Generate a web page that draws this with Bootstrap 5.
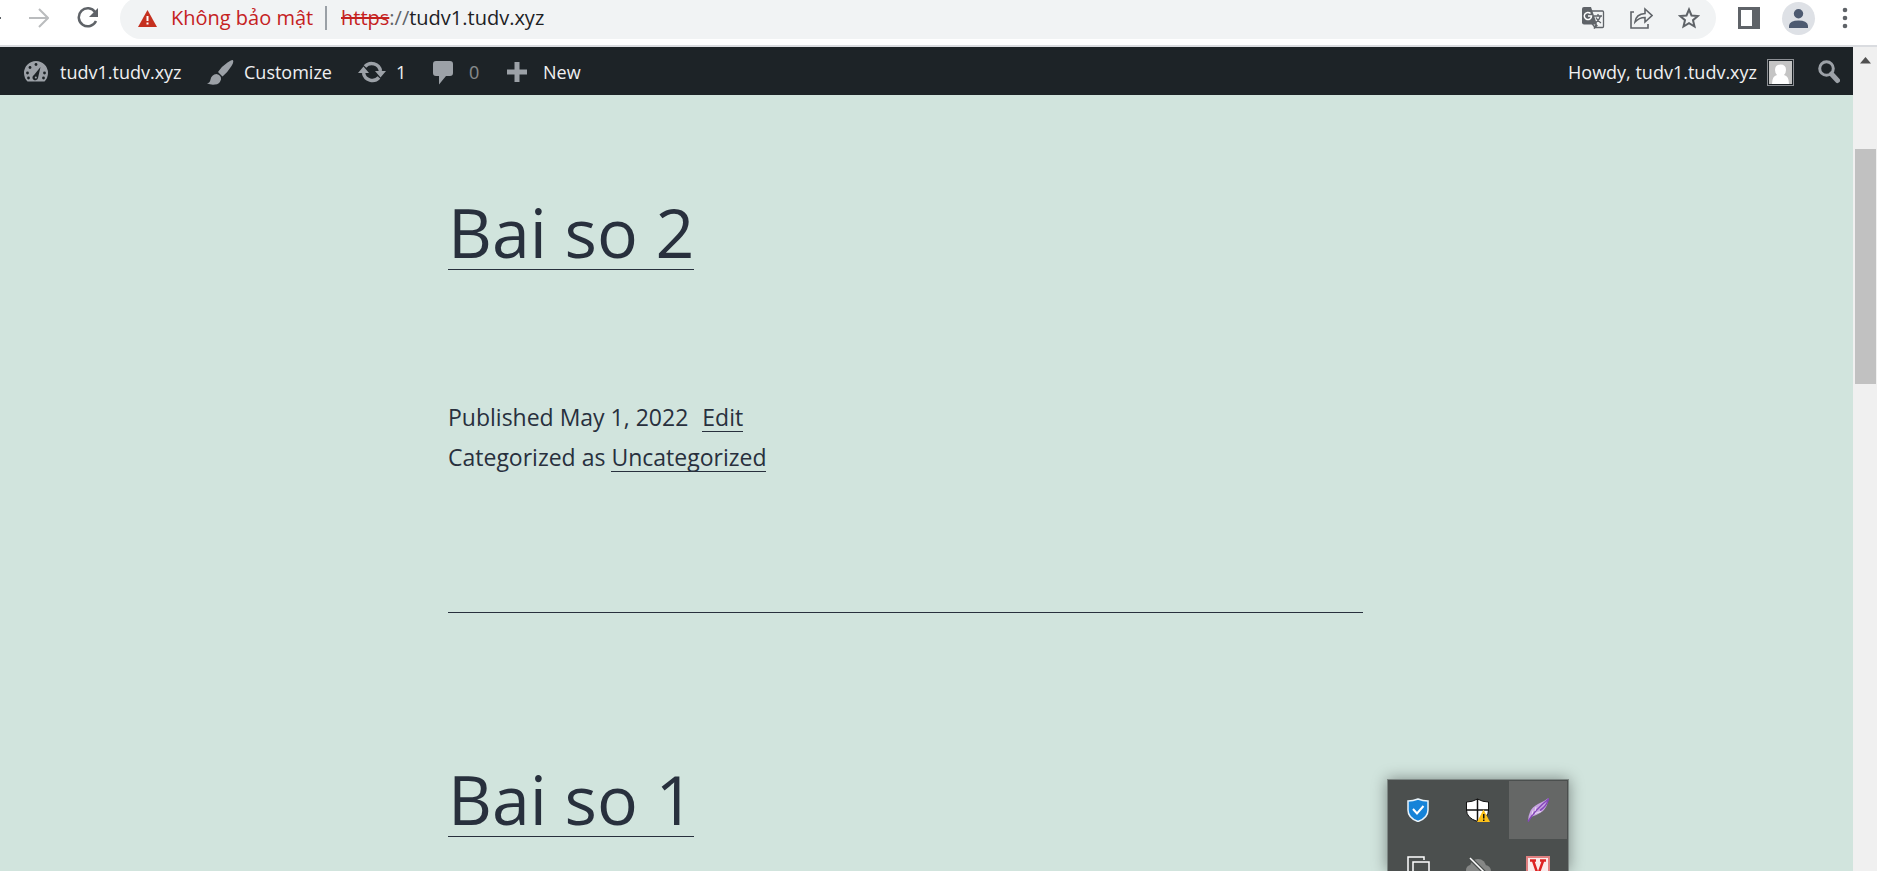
<!DOCTYPE html>
<html lang="en">
<head>
<meta charset="utf-8">
<meta name="viewport" content="width=device-width, initial-scale=1">
<title>tudv1.tudv.xyz</title>
<link href="https://cdn.jsdelivr.net/npm/bootstrap@5.3.0/dist/css/bootstrap.min.css" rel="stylesheet">
<style>
  body { font-family: "Open Sans", "Noto Sans", sans-serif; color: #28303d; background: #d1e4dd; }
  svg { display: block; flex: none; }
  a { color: inherit; text-decoration: none; }
  .plain { border: 0; padding: 0; background: none; color: inherit; display: block; }

  /* Browser toolbar */
  .toolbar { height: 47px; background: #fff; border-bottom: 2px solid #dadce0; color: #5f6368; padding-right: 24px; }
  .tool-row { height: 42px; margin-top: -3px; }
  .nav-tools { width: 120px; gap: 28px; }
  .omnibox { background: #f1f3f4; border-radius: 21px; padding: 0 16px 0 18px; margin-right: 22px; font-size: 20px; line-height: 28px; }
  .warn { color: #c5221f; width: 168px; gap: 14px; }
  .sep { width: 2px; height: 24px; background: #9aa0a6; margin: 0 14px 0 19px; }
  .url { color: #202124; }
  .url s { color: #c5221f; }
  .url span { color: #5f6368; }
  .page-tools { gap: 25px; }
  .profile { width: 33px; height: 33px; background: #dee1e6; color: #4d5a70; margin: 0 22px; }

  /* Admin bar */
  .adminbar { height: 48px; background: #1d2327; color: #f0f0f1; font-size: 18px; line-height: 28px; padding: 2px 13px 0 22px; }
  .adminbar svg { color: #9ca1a7; }
  .adminbar a, .adminbar button { display: flex; align-items: center; gap: 10px; white-space: nowrap; }
  .w-site { width: 184px; } .w-custom { width: 152px; } .w-upd { width: 73px; } .w-com { width: 74px; }

  /* Posts */
  .view { background: #d1e4dd; }
  .posts { display: grid; grid-template-columns: 448fr 915fr 490fr; }
  .posts > div { grid-column: 2; }
  .post { height: 567px; }
  .post h2 { font-size: 68px; line-height: 90px; padding-top: 92px; font-weight: 400; margin: 0; white-space: nowrap; }
  .post h2 a { display: inline-block; height: 83px; border-bottom: 1px solid #28303d; }
  .meta { font-size: 23px; line-height: 40px; padding-top: 120px; }
  .meta a { display: inline-block; line-height: 28px; border-bottom: 1px solid #28303d; }
  .rule { height: 1px; background: #28303d; margin-top: 135px; }

  /* Scrollbar */
  .scroll { width: 24px; background: #f0f0f0; padding: 10px 1px 0 2px; }
  .thumb { height: 235px; background: #c1c1c1; margin-top: 85px; }

  /* Notification area flyout */
  .tray { position: fixed; right: 308px; bottom: 0; width: 182px; height: 92px; overflow: hidden; background: #4b4f4e; border: 1px solid #7d8784; border-bottom: 0; padding: 1px; }
  .tray-shadow { position: fixed; right: 308px; bottom: 0; width: 182px; height: 92px; box-shadow: 0 0 14px rgba(0,0,0,.4); }
  .tray button { width: 58px; height: 58px; display: flex; align-items: center; justify-content: center; }
  .tray .hot { background: #656766; }
  .tray-grid { display: grid; grid-template-columns: repeat(3, 58px); justify-content: space-between; }
</style>
</head>
<body class="vh-100 overflow-hidden d-flex flex-column">
<header class="toolbar flex-shrink-0 overflow-hidden">
  <div class="tool-row d-flex align-items-center">
    <div class="nav-tools d-flex align-items-center flex-shrink-0">
      <button class="plain" aria-label="Back"><svg width="1" height="20" viewBox="0 0 1 20"><path d="M0 9h1v2H0z" fill="#5f6368"/></svg></button>
      <button class="plain" aria-label="Forward"><svg width="20" height="20" viewBox="0 0 20 20" fill="none" stroke="#babcbe" stroke-width="2"><path d="M0 10h18M10 1l9 9-9 9"/></svg></button>
      <button class="plain" aria-label="Reload"><svg width="22" height="22" viewBox="0 0 22 22"><path d="M18.2 5.2A9 9 0 1 0 19 14" fill="none" stroke="#5f6368" stroke-width="2.500"/><path d="M21 1v9h-9z" fill="#5f6368"/></svg></button>
    </div>
    <div class="omnibox d-flex align-items-center flex-grow-1 h-100">
      <button class="plain warn d-flex align-items-center text-nowrap"><svg width="19" height="17" viewBox="0 0 19 17"><path d="M9.500 0L19 17H0z" fill="#c5301f"/><path d="M8.500 6h2v5h-2zM8.500 12.500h2v2h-2z" fill="#fff"/></svg>Không bảo mật</button>
      <div class="sep"></div>
      <a class="url flex-grow-1 text-nowrap" href="#"><s>https</s><span>://</span>tudv1.tudv.xyz</a>
      <div class="page-tools d-flex align-items-center">
        <button class="plain" aria-label="Translate"><svg width="23" height="22" viewBox="0 0 23 22"><path d="M10 4h10.500q1 0 1 1v14.500q0 1-1 1H13l-3-4" fill="none" stroke="#5f6368" stroke-width="1.300"/><path d="M2 0h7l6 17.500H2q-2 0-2-2V2Q0 0 2 0z" fill="#5f6368"/><path d="M8.500 6.500A3.600 3.600 0 1 0 9.500 9H6" fill="none" stroke="#fff" stroke-width="1.500"/><path d="M12 9h8M16 7v2M18.500 9q-1 4-5 7M14 10.500q1.500 3.500 5 5.500M14 17.500l-2 4 3-3z" fill="none" stroke="#5f6368" stroke-width="1.300"/></svg></button>
        <button class="plain" aria-label="Share"><svg width="23" height="22" viewBox="0 0 23 22" fill="none" stroke="#5f6368" stroke-width="1.600"><path d="M4 5H1v16h17v-4"/><path d="M5 15q1-8 10-8.500V2l7 6.500-7 6.500v-4.500Q9 10.500 5 15z"/></svg></button>
        <button class="plain" aria-label="Bookmark"><svg width="22" height="22" viewBox="0 0 22 22"><path d="M11 2.500l2.500 6 6.300.5-4.800 4.200 1.500 6.300-5.500-3.400-5.500 3.400L7 13.200 2.200 9l6.300-.5z" fill="none" stroke="#5f6368" stroke-width="2"/></svg></button>
      </div>
    </div>
    <button class="plain" aria-label="Side panel"><svg width="22" height="22" viewBox="0 0 22 22"><path d="M0 0h22v22H0zM3 3v16h11V3z" fill="#5f6368" fill-rule="evenodd"/></svg></button>
    <button class="plain profile rounded-circle d-flex align-items-center justify-content-center" aria-label="Profile"><svg width="19" height="19" viewBox="0 0 19 19" fill="currentColor"><circle cx="9.500" cy="4.800" r="4.700"/><path d="M0 19v-2.500Q1 11.500 9.500 11.500T19 16.500V19z"/></svg></button>
    <button class="plain" aria-label="Menu"><svg width="16" height="22" viewBox="0 0 16 22" fill="#5f6368"><circle cx="8" cy="3" r="2.300"/><circle cx="8" cy="11" r="2.300"/><circle cx="8" cy="19" r="2.300"/></svg></button>
  </div>
</header>

<div class="d-flex flex-grow-1 overflow-hidden">
  <div class="view flex-grow-1 overflow-hidden">
    <nav class="adminbar d-flex align-items-center" aria-label="Admin">
      <a class="w-site" href="#"><svg width="28" height="28" viewBox="0 0 28 28"><path d="M5.500 23.500A12 12 0 1 1 22.500 23.500z" fill="currentColor"/><g fill="#1d2327"><circle cx="5.500" cy="15" r="1.400"/><circle cx="8" cy="9.500" r="1.400"/><circle cx="14" cy="6.500" r="1.400"/><circle cx="22.500" cy="15" r="1.400"/><circle cx="6.500" cy="20" r="1.400"/><circle cx="21.500" cy="20" r="1.400"/><path d="M18.500 9L16 20a2.800 2.800 0 1 1-4-3z"/></g><circle cx="13.800" cy="19.500" r="1" fill="currentColor"/></svg>tudv1.tudv.xyz</a>
      <a class="w-custom" href="#"><svg width="28" height="28" viewBox="0 0 28 28" fill="currentColor"><path d="M26.500 2q2 1-1 6-4 6.500-9 10.500l-4.500-4.500Q16 8 21.500 4.500 25.500 1.500 26.500 2z"/><path d="M10.500 16q5 1 4.500 5.500-1.500 5-6 5-4 .5-8-1 3-.5 3.500-4 1-5 6-5.500z"/></svg>Customize</a>
      <a class="w-upd" href="#"><svg width="28" height="24" viewBox="0 0 28 24"><path d="M7 6.500A9 9 0 0 1 22.500 11M21 17.500A9 9 0 0 1 5.500 13" fill="none" stroke="currentColor" stroke-width="3.500"/><path d="M0 13l5.500-6.500L11 13zM17 11h11l-5.500 6.500z" fill="currentColor"/></svg>1</a>
      <a class="w-com" href="#"><svg width="24" height="26" viewBox="0 0 24 26" fill="currentColor"><path d="M5 2h14q3 0 3 3v9q0 3-3 3h-4l-7 8.500V17H5q-3 0-3-3V5q0-3 3-3z"/></svg><span class="opacity-50 ps-1">0</span></a>
      <a class="me-auto" href="#"><svg width="24" height="24" viewBox="0 0 24 24" fill="currentColor"><path d="M9.500 2h5v7.500H22v5h-7.500V22h-5v-7.500H2v-5h7.500z"/></svg><span class="ps-1">New</span></a>
      <a href="#">Howdy, tudv1.tudv.xyz<svg width="27" height="27" viewBox="0 0 27 27"><path d="M0 0h27v27H0z" fill="#8c8f94"/><path d="M1 1h25v25H1z" fill="#1d2327"/><path d="M2 2h23v23H2z" fill="#c4c4c4"/><path d="M5 25q0-8 5-9-2-2-2-5 0-5.500 5.500-5.500T19 11q0 3-2 5 5 1 5 9z" fill="#fff"/></svg></a>
      <button class="plain ps-4" aria-label="Search"><svg width="22" height="24" viewBox="0 0 22 24" fill="none" stroke="currentColor"><circle cx="8.500" cy="8.500" r="6.800" stroke-width="3"/><path d="M13.500 14l6 6.500" stroke-width="5" stroke-linecap="round"/></svg></button>
    </nav>
    <main class="posts">
      <div>
        <article class="post">
          <h2><a href="#">Bai so 2</a></h2>
          <div class="meta">
            <div>Published May 1, 2022 <a class="ms-2" href="#">Edit</a></div>
            <div>Categorized as <a href="#">Uncategorized</a></div>
          </div>
          <div class="rule"></div>
        </article>
        <article class="post"><h2><a href="#">Bai so 1</a></h2></article>
      </div>
    </main>
  </div>
  <div class="scroll flex-shrink-0">
    <svg width="21" height="7" viewBox="0 0 21 7"><path d="M5 6.500L10.500 0 16 6.500z" fill="#505050"/></svg>
    <div class="thumb"></div>
  </div>
</div>

<div class="tray-shadow"></div>
<aside class="tray" aria-label="Notification area">
  <div class="tray-grid">
    <button class="plain" aria-label="Protection"><svg width="22" height="24" viewBox="0 0 22 24"><path d="M11 1q5 2 10 2v9q0 8-10 11.500Q1 20 1 12V3q5 0 10-2z" fill="#1683d8" stroke="#e8f3fb" stroke-width="1.500"/><path d="M6 11l4 4.500L16.500 8" fill="none" stroke="#fff" stroke-width="2"/></svg></button>
    <button class="plain" aria-label="Windows Security"><svg width="24" height="24" viewBox="0 0 24 24"><path d="M11.500 1q5 3 11 3v8q0 8-11 11.500Q.500 20 .500 12V4q6 0 11-3z" fill="#fff" stroke="#111"/><path d="M11.500 1v22M0 12h23" stroke="#111" stroke-width="1.500"/><path d="M17.500 11.500L24 24H11z" fill="#fcc018"/><path d="M17 16h1.500v4.500H17zM17 21.500h1.500V23H17z" fill="#111"/></svg></button>
    <button class="plain hot" aria-label="Feather"><svg width="22" height="24" viewBox="0 0 22 24"><path d="M21.500 0q-.5 4-1.500 7-2 5-7 8-4 2.500-9 4L1 23.500Q1 18 3 14q2-5 8-8Q17 3.500 21.500 0z" fill="#c8a4e2"/><path d="M1 23.500Q8 12 21.500 1 20 8 13 12.500" fill="none" stroke="#8447b8" stroke-width="1.500"/><path d="M5 16.500l1-4M8 13l1-4M8 15.500l6-2" fill="none" stroke="#e9dcf4" stroke-width="1"/></svg></button>
    <button class="plain" aria-label="Windows"><svg width="24" height="24" viewBox="0 0 24 24" fill="none" stroke="#fff" stroke-width="1.500"><path d="M18 4V1H2v17h3"/><path d="M7 6h16v16H7z"/></svg></button>
    <button class="plain" aria-label="Cloud sync paused"><svg width="26" height="24" viewBox="0 0 26 24"><g fill="#858786"><circle cx="13" cy="11" r="8"/><circle cx="6" cy="14" r="5"/><circle cx="20" cy="15" r="6"/></g><path d="M4 1l20 20" stroke="#4b4f4e" stroke-width="4"/><path d="M5 2l20 20" stroke="#fff" stroke-width="1.500"/></svg></button>
    <button class="plain" aria-label="Vietnamese keyboard"><svg width="24" height="24" viewBox="0 0 24 24"><path d="M1 1h22v22H1z" fill="#fbeaea" stroke="#e08080" stroke-width="2"/><path d="M4 4.500h6M14 4.500h6M7 4.500L12 19l5-14" fill="none" stroke="#d22" stroke-width="2.500"/></svg></button>
  </div>
</aside>
<script src="https://cdn.jsdelivr.net/npm/bootstrap@5.3.0/dist/js/bootstrap.bundle.min.js"></script>
</body>
</html>
